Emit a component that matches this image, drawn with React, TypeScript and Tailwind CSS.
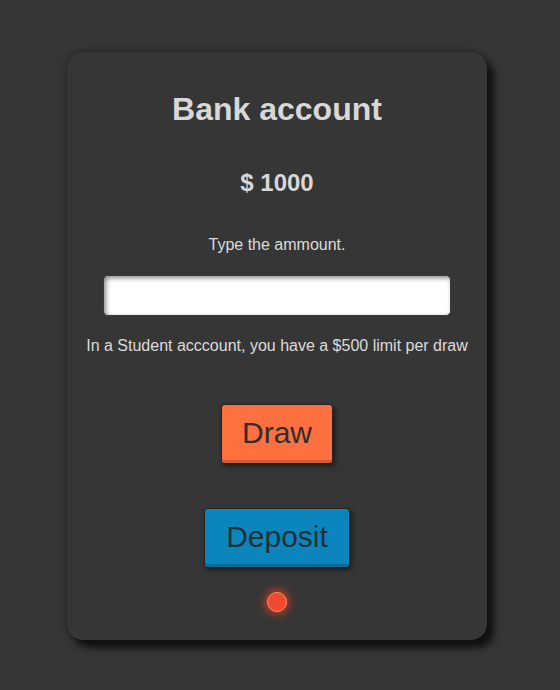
export default function App() {
  return (
    <div
      className="min-h-[690px] w-full bg-[#363636] flex pl-[67px] pt-[52px]"
      style={{ fontFamily: '"Liberation Sans", Arial, sans-serif' }}
    >
      <div className="w-[420px] h-[588px] rounded-[16px] bg-[#363636] shadow-[7px_8px_7px_#111,0_0_6px_#222] flex flex-col items-center pt-[39px]">
        <h1 className="text-[32px] leading-[36px] font-bold text-[#d8d8d8]">Bank account</h1>
        <p className="mt-[42px] text-[24px] leading-[28px] font-bold text-[#d8d8d8]">$ 1000</p>
        <p className="mt-[39px] text-[16px] leading-[18px] text-[#dcdcdc]">Type the ammount.</p>
        <input
          type="text"
          className="mt-[21px] w-[348px] h-[41px] rounded-[5px] bg-white outline-none border border-[#3a3a3a] shadow-[inset_2px_2px_5px_#888]"
        />
        <p className="mt-[21px] text-[16px] leading-[18px] text-[#dcdcdc]">
          In a Student acccount, you have a $500 limit per draw
        </p>
        <button className="mt-[49px] h-[59px] px-[20px] rounded-[4px] bg-[#ff7040] border border-[#242424] border-b-[3px] border-b-[#d85a2c] text-[30px] text-[#2e2e2e] shadow-[2px_3px_5px_#1a1a1a]">
          Draw
        </button>
        <button className="mt-[45px] h-[59px] px-[21px] rounded-[4px] bg-[#0c85bd] border border-[#242424] border-b-[3px] border-b-[#0a6a98] text-[30px] text-[#223039] shadow-[2px_3px_5px_#1a1a1a]">
          Deposit
        </button>
        <div className="mt-[25px] w-[20px] h-[20px] rounded-full bg-[#f04a2e] border border-[#ff8a70] shadow-[0_0_8px_2px_#c0401f]" />
      </div>
    </div>
  );
}
